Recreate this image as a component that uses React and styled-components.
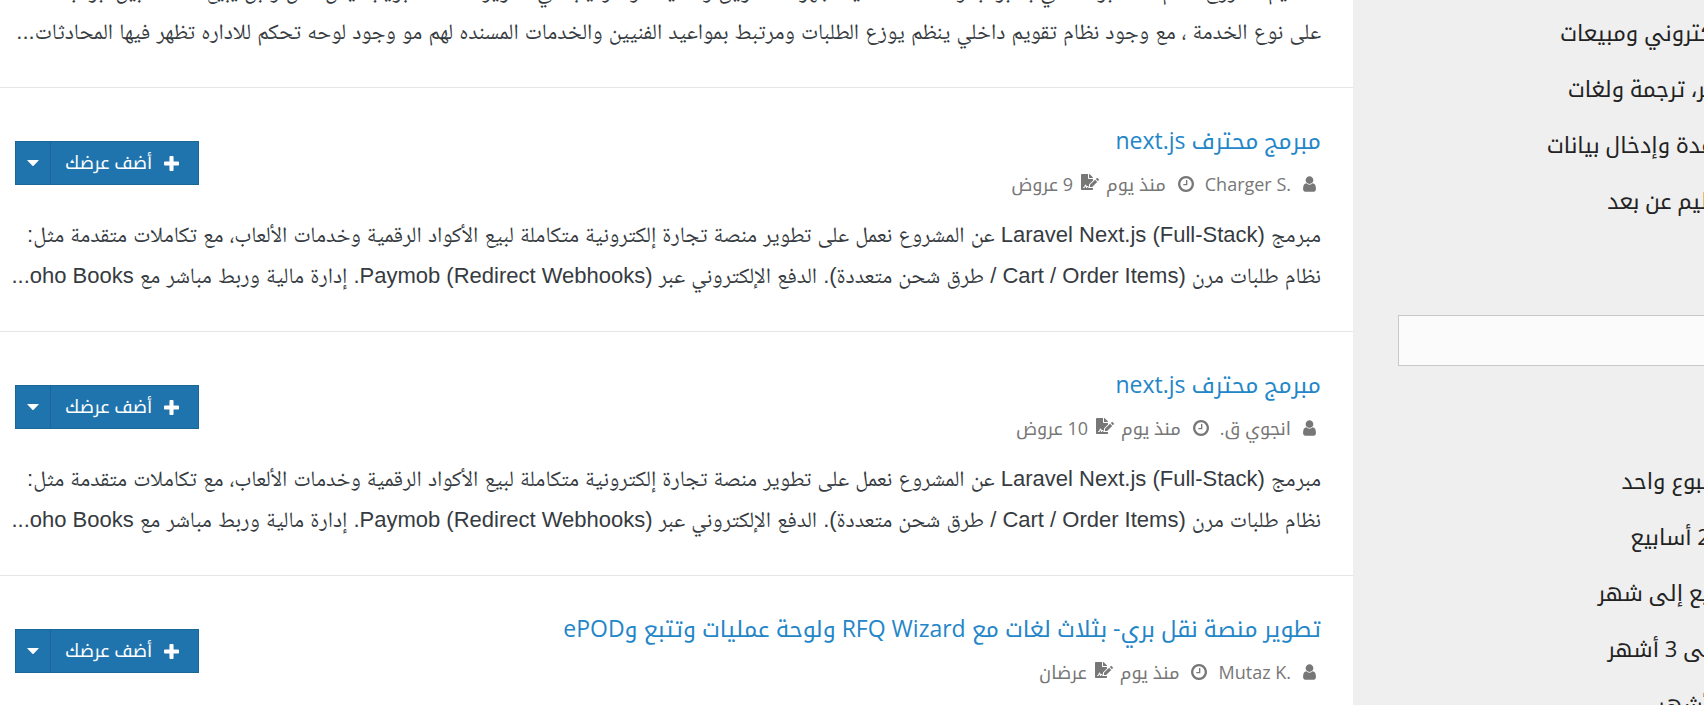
import styled, { createGlobalStyle } from "styled-components";
import { FaFileSignature } from "react-icons/fa";

const projects = [
    {
        id: 1,
        title: "مبرمج محترف next.js",
        author: "Charger S.",
        time: "منذ يوم",
        offers: "9 عروض",
        description:
            "مبرمج Laravel Next.js (Full-Stack) عن المشروع نعمل على تطوير منصة تجارة إلكترونية متكاملة لبيع الأكواد الرقمية وخدمات الألعاب، مع تكاملات متقدمة مثل: نظام طلبات مرن (Cart / Order Items / طرق شحن متعددة). الدفع الإلكتروني عبر Paymob (Redirect Webhooks). إدارة مالية وربط مباشر مع oho Books...",
    },
    {
        id: 2,
        title: "مبرمج محترف next.js",
        author: "انجوي ق.",
        time: "منذ يوم",
        offers: "10 عروض",
        description:
            "مبرمج Laravel Next.js (Full-Stack) عن المشروع نعمل على تطوير منصة تجارة إلكترونية متكاملة لبيع الأكواد الرقمية وخدمات الألعاب، مع تكاملات متقدمة مثل: نظام طلبات مرن (Cart / Order Items / طرق شحن متعددة). الدفع الإلكتروني عبر Paymob (Redirect Webhooks). إدارة مالية وربط مباشر مع oho Books...",
    },
    {
        id: 3,
        title: "تطوير منصة نقل بري- بثلاث لغات مع RFQ Wizard ولوحة عمليات وتتبع وePOD",
        author: "Mutaz K.",
        time: "منذ يوم",
        offers: "عرضان",
    },
];

const categories = [
    "تسويق إلكتروني ومبيعات",
    "كتابة، تحرير، ترجمة ولغات",
    "دعم، مساعدة وإدخال بيانات",
    "تدريب وتعليم عن بعد",
];

const durations = [
    "أقل من أسبوع واحد",
    "من 1 إلى 2 أسابيع",
    "من 2 أسابيع إلى شهر",
    "من شهر إلى 3 أشهر",
    "أكثر من 3 أشهر",
];

function UserIcon() {
    return (
        <svg width="13" height="18" viewBox="0 0 1280 1792" fill="currentColor" aria-hidden="true">
            <path d="M1280 1399q0 109-62.5 187t-150.5 78h-854q-88 0-150.5-78t-62.5-187q0-85 8.5-160.5t31.5-152 58.5-131 94-89 134.5-34.5q131 128 313 128t313-128q76 0 134.5 34.5t94 89 58.5 131 31.5 152 8.5 160.5zm-256-887q0 159-112.5 271.5t-271.5 112.5-271.5-112.5-112.5-271.5 112.5-271.5 271.5-112.5 271.5 112.5 112.5 271.5z"/>
        </svg>
    );
}

function ClockIcon() {
    return (
        <svg width="16" height="16" viewBox="0 128 1536 1536" fill="currentColor" aria-hidden="true">
            <path d="M896 544v448q0 14-9 23t-23 9h-320q-14 0-23-9t-9-23v-64q0-14 9-23t23-9h224v-352q0-14 9-23t23-9h64q14 0 23 9t9 23zm416 352q0-148-73-273t-198-198-273-73-273 73-198 198-73 273 73 273 198 198 273 73 273-73 198-198 73-273zm224 0q0 209-103 385.5t-279.5 279.5-385.5 103-385.5-103-279.5-279.5-103-385.5 103-385.5 279.5-279.5 385.5-103 385.5 103 279.5 279.5 103 385.5z"/>
        </svg>
    );
}

function PlusIcon() {
    return (
        <svg width="15" height="15" viewBox="0 192 1408 1408" fill="currentColor" aria-hidden="true">
            <path d="M1408 800v192q0 40-28 68t-68 28h-416v416q0 40-28 68t-68 28h-192q-40 0-68-28t-28-68v-416h-416q-40 0-68-28t-28-68v-192q0-40 28-68t68-28h416v-416q0-40 28-68t68-28h192q40 0 68 28t28 68v416h416q40 0 68 28t28 68z"/>
        </svg>
    );
}

function CaretIcon() {
    return (
        <svg width="12" height="6" viewBox="0 0 12 6" fill="currentColor" aria-hidden="true">
            <path d="M0.6 0h10.8q0.6 0 0.2 0.6l-5 5.1q-0.6 0.6-1.2 0l-5-5.1q-0.4-0.6 0.2-0.6z"/>
        </svg>
    );
}

function Project({project}) {
    return (
        <Item>
            <ItemHeader>
                <div>
                    <Title><a href={`#project-${project.id}`}>{project.title}</a></Title>
                    <Meta>
                        <li><UserIcon/><bdi>{project.author}</bdi></li>
                        <li><ClockIcon/>{project.time}</li>
                        <li className="offers"><FaFileSignature size={18}/>{project.offers}</li>
                    </Meta>
                </div>
                <ButtonGroup>
                    <Button type="button"><PlusIcon/>أضف عرضك</Button>
                    <Button type="button" $toggle aria-label="خيارات"><CaretIcon/></Button>
                </ButtonGroup>
            </ItemHeader>
            {project.description && <Description>{project.description}</Description>}
        </Item>
    );
}

function App() {
    return (
        <Page>
            <GlobalStyle/>
            <Main>
                <Item>
                    <Description>
                        تصميم مشروع نظام شات بوت ذكي بالابواب وخدمات التقنية لجهود التسويق والصيانة والتركيب في تطوير خدمة التبويب ليس عمل و بل يبيع للعملاء بين ابواب
                        <br/>
                        على نوع الخدمة ، مع وجود نظام تقويم داخلي ينظم يوزع الطلبات ومرتبط بمواعيد الفنيين والخدمات المسنده لهم مو وجود لوحه تحكم للاداره تظهر فيها المحادثات...
                    </Description>
                </Item>
                {projects.map((project) => (
                    <Project key={project.id} project={project}/>
                ))}
            </Main>
            <Sidebar>
                <Filters>
                    <FilterList>
                        {categories.map((name) => <li key={name}>{name}</li>)}
                    </FilterList>
                    <SkillInput type="text" aria-label="المهارات"/>
                    <FilterList>
                        {durations.map((name) => <li key={name}>{name}</li>)}
                    </FilterList>
                </Filters>
            </Sidebar>
        </Page>
    );
}

const kufi = `"Open Sans", "Noto Kufi Arabic", sans-serif`;
const naskh = `"Liberation Sans", "Noto Naskh Arabic", sans-serif`;

const GlobalStyle = createGlobalStyle`
  * {
    box-sizing: border-box;
  }

  body {
    margin: 0;
    background: #fff;
    font-family: ${kufi};
  }

  ul {
    margin: 0;
    padding: 0;
    list-style: none;
  }
`;

const Page = styled.div`
  display: flex;
  height: 100vh;
  overflow: hidden;
`;

const Main = styled.main`
  flex: 1;
  direction: rtl;
  margin-top: -30px;
`;

const Item = styled.article`
  padding: 0 32px 35px 8px;
  border-bottom: 1px solid #e6e6e6;
`;

const ItemHeader = styled.header`
  display: flex;
  align-items: center;
  justify-content: space-between;
  padding: 31px 0 0 7px;
  margin-bottom: 7px;
`;

const Title = styled.h2`
  margin: 0;
  font-size: 23px;
  font-weight: 400;
  line-height: 42px;

  a {
    color: #2386c8;
    text-decoration: none;
  }
`;

const Meta = styled.ul`
  display: flex;
  gap: 11px;
  padding-right: 5px;
  font-size: 18px;
  line-height: 46px;
  color: #777;

  li {
    display: flex;
    align-items: center;
    gap: 12px;
  }

  .offers {
    gap: 8px;
    margin-right: -4px;
  }

  .offers svg {
    margin-bottom: 4px;
  }
`;

const ButtonGroup = styled.div`
  display: flex;
`;

const Button = styled.button`
  display: flex;
  align-items: center;
  justify-content: center;
  gap: 12px;
  height: 44px;
  padding: ${(p) => (p.$toggle ? "0 11px" : "0 19px 0 14px")};
  border: 1px solid #1b6699;
  border-right-width: ${(p) => (p.$toggle ? 0 : "1px")};
  background: #2074ae;
  color: #fff;
  font-family: ${kufi};
  font-size: 18px;
`;

const Description = styled.p`
  margin: 0;
  font-family: ${naskh};
  font-size: 22px;
  line-height: 41px;
  color: #363b3f;
`;

const Sidebar = styled.aside`
  flex: 0 0 351px;
  overflow: hidden;
  background: #efefef;
`;

const Filters = styled.div`
  width: 500px;
  padding: 4px 0 0 45px;
  direction: rtl;
`;

const FilterList = styled.ul`
  padding-right: 51px;
  font-size: 22px;
  line-height: 56px;
  color: #222;
`;

const SkillInput = styled.input`
  display: block;
  width: 100%;
  height: 51px;
  margin: 87px 0 86px;
  border: 1px solid #c8c8c8;
  background: #fbfbfb;
`;

export default App;
